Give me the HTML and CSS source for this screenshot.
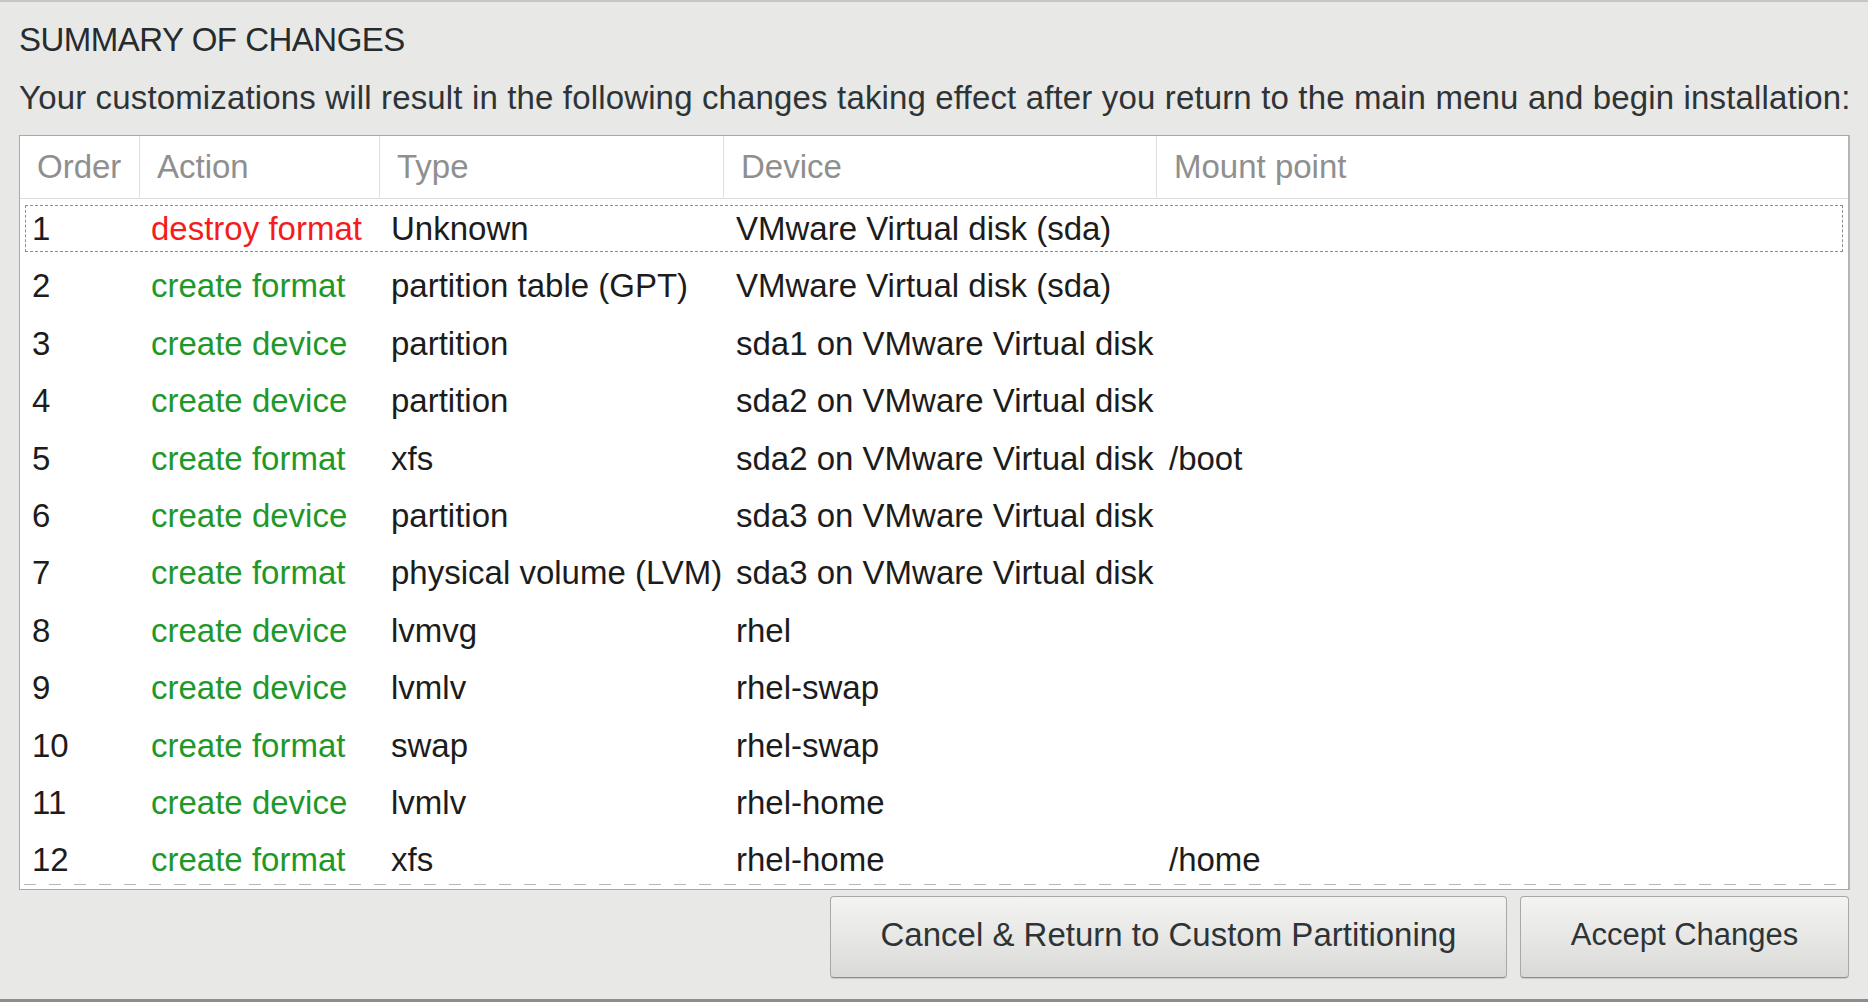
FILE: index.html
```html
<!DOCTYPE html>
<html lang="en">
<head>
<meta charset="utf-8">
<title>Summary of Changes</title>
<link rel="stylesheet" href="styles.css">
</head>
<body>
<div class="dialog">
  <h1 class="title">SUMMARY OF CHANGES</h1>
  <p class="intro">Your customizations will result in the following changes taking effect after you return to the main menu and begin installation:</p>
  <div class="table">
    <div class="thead">
      <div class="th">Order</div>
      <div class="th">Action</div>
      <div class="th">Type</div>
      <div class="th">Device</div>
      <div class="th">Mount point</div>
    </div>
    <div class="tbody">
      <div class="row focused"><span>1</span><span class="destroy">destroy format</span><span>Unknown</span><span>VMware Virtual disk (sda)</span><span></span></div>
      <div class="row"><span>2</span><span class="create">create format</span><span>partition table (GPT)</span><span>VMware Virtual disk (sda)</span><span></span></div>
      <div class="row"><span>3</span><span class="create">create device</span><span>partition</span><span>sda1 on VMware Virtual disk</span><span></span></div>
      <div class="row"><span>4</span><span class="create">create device</span><span>partition</span><span>sda2 on VMware Virtual disk</span><span></span></div>
      <div class="row"><span>5</span><span class="create">create format</span><span>xfs</span><span>sda2 on VMware Virtual disk</span><span>/boot</span></div>
      <div class="row"><span>6</span><span class="create">create device</span><span>partition</span><span>sda3 on VMware Virtual disk</span><span></span></div>
      <div class="row"><span>7</span><span class="create">create format</span><span>physical volume (LVM)</span><span>sda3 on VMware Virtual disk</span><span></span></div>
      <div class="row"><span>8</span><span class="create">create device</span><span>lvmvg</span><span>rhel</span><span></span></div>
      <div class="row"><span>9</span><span class="create">create device</span><span>lvmlv</span><span>rhel-swap</span><span></span></div>
      <div class="row"><span>10</span><span class="create">create format</span><span>swap</span><span>rhel-swap</span><span></span></div>
      <div class="row"><span>11</span><span class="create">create device</span><span>lvmlv</span><span>rhel-home</span><span></span></div>
      <div class="row"><span>12</span><span class="create">create format</span><span>xfs</span><span>rhel-home</span><span>/home</span></div>
      <div class="scroll-edge"></div>
    </div>
  </div>
  <div class="actions">
    <button class="btn btn-cancel" type="button">Cancel &amp; Return to Custom Partitioning</button>
    <button class="btn btn-accept" type="button">Accept Changes</button>
  </div>
</div>
</body>
</html>
```

FILE: styles.css
```css
html, body {
  margin: 0;
  padding: 0;
}

body {
  width: 1868px;
  height: 1002px;
  background: #e8e8e7;
  font-family: "Liberation Sans", Arial, sans-serif;
  color: #2e3436;
  overflow: hidden;
}

.dialog {
  box-sizing: border-box;
  height: 1002px;
  border-top: 2px solid #c6c6c4;
  border-bottom: 3px solid #8d8d8b;
  padding: 0 18px 0 19px;
  display: flex;
  flex-direction: column;
}

.title {
  margin: 20px 0 0 0;
  font-size: 33px;
  line-height: 36px;
  font-weight: normal;
  color: #262b2d;
  letter-spacing: -0.5px;
}

.intro {
  margin: 21px 0 0 0;
  font-size: 33px;
  line-height: 38px;
  color: #2e3436;
  white-space: nowrap;
  letter-spacing: 0.15px;
}

.table {
  margin-top: 18px;
  background: #ffffff;
  border: 1px solid #a9a9a7;
  border-right: 2px solid #b4b4b2;
}

.thead,
.row {
  display: grid;
  grid-template-columns: 119px 240px 344px 433px 1fr;
}

.thead {
  height: 62px;
  border-bottom: 1px solid #dcdcdc;
}

.th {
  padding-left: 17px;
  font-size: 33px;
  line-height: 62px;
  color: #8f8f8f;
  border-left: 1px solid #dedede;
}

.th:first-child {
  border-left: none;
}

.tbody {
  position: relative;
  padding-top: 1px;
}

.row {
  height: 57.4px;
  font-size: 33px;
  line-height: 57.4px;
  color: #1c1c1c;
  white-space: nowrap;
}

.row span {
  padding-left: 12px;
}

.row span:nth-child(4),
.row span:nth-child(5) {
  padding-left: 13px;
}

.row.focused {
  outline: 1px dashed #8e8e8e;
  outline-offset: -6px;
}

.destroy {
  color: #f41c1c;
}

.create {
  color: #1f982a;
}

.scroll-edge {
  position: absolute;
  left: 4px;
  right: 4px;
  bottom: 4px;
  height: 1px;
  background: repeating-linear-gradient(to right, #b8b8b8 0, #b8b8b8 12px, transparent 12px, transparent 25px);
}

.actions {
  display: flex;
  justify-content: flex-end;
  gap: 13px;
  margin-top: 6px;
  padding-right: 1px;
}

.btn {
  height: 82px;
  font-family: "Liberation Sans", Arial, sans-serif;
  font-size: 33px;
  color: #2e3436;
  background: linear-gradient(to bottom, #f3f3f2 0%, #e6e6e5 55%, #d9d9d7 100%);
  border: 1px solid #a8a8a6;
  border-bottom-color: #8e8e8c;
  border-radius: 4px;
  box-shadow: 0 1px 0 rgba(0, 0, 0, 0.12);
  padding: 0 0 3px 0;
  text-align: center;
}

.btn-cancel {
  width: 677px;
}

.btn-accept {
  width: 329px;
  font-size: 31px;
}
```
